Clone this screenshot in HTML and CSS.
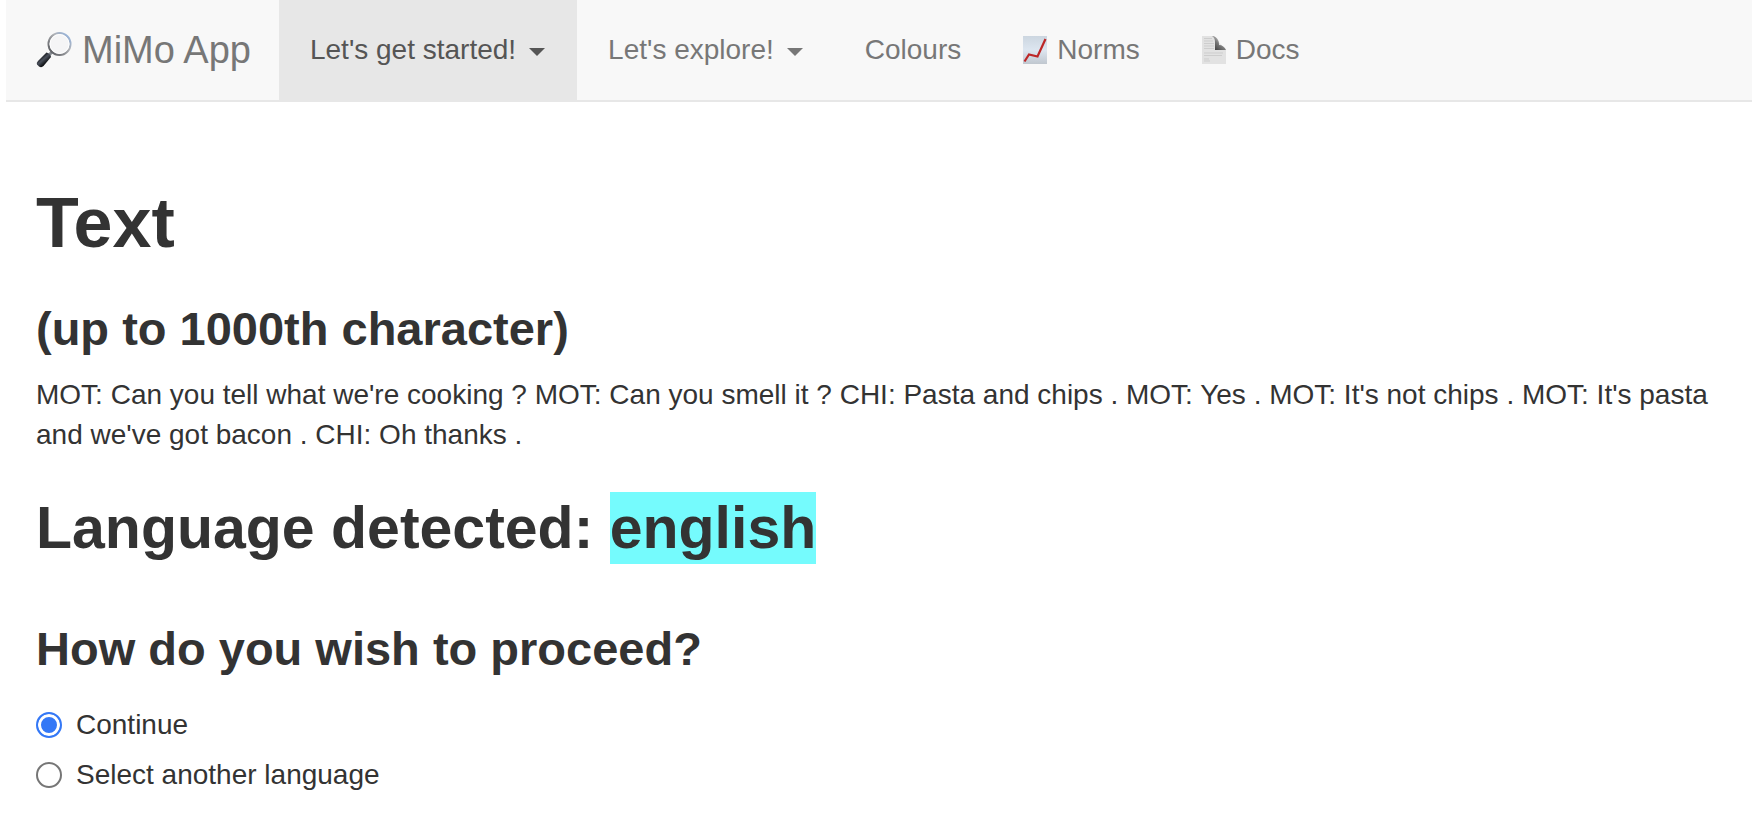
FILE: index.html
```html
<!DOCTYPE html>
<html lang="en">
<head>
<meta charset="utf-8">
<title>MiMo App</title>
<link rel="stylesheet" href="styles.css">
</head>
<body>
<nav class="navbar">
  <a class="brand" href="#">
    <svg class="brand-icon" viewBox="0 0 36 36" aria-hidden="true">
      <defs>
        <linearGradient id="rim" x1="1" y1="0" x2="0" y2="1"><stop offset="0" stop-color="#8fb4e6"/><stop offset=".4" stop-color="#b0b2b6"/><stop offset="1" stop-color="#4c4e52"/></linearGradient>
        <linearGradient id="grip" gradientUnits="userSpaceOnUse" x1="5" y1="24" x2="11" y2="31"><stop offset="0" stop-color="#0e1014"/><stop offset=".45" stop-color="#4b515c"/><stop offset="1" stop-color="#050607"/></linearGradient>
      </defs>
      <path d="M12 24l5-5" stroke="#85898f" stroke-width="3"/>
      <path d="M2 29L10.500 20.500Q14.500 21.500 15 25L7.500 34Q5.500 36 3 34.500L1 32.500Q0 31 2 29z" fill="url(#grip)"/>
      <circle cx="23.500" cy="12" r="11" fill="#f5f5f6" stroke="url(#rim)" stroke-width="2"/>
      <circle cx="23.500" cy="12" r="9.500" fill="none" stroke="#fff" stroke-width="1"/>
    </svg>
    MiMo App
  </a>
  <a class="nav-link active" href="#" aria-haspopup="true">Let's get started! <span class="caret"></span></a>
  <a class="nav-link" href="#" aria-haspopup="true">Let's explore! <span class="caret"></span></a>
  <a class="nav-link" href="#">Colours</a>
  <a class="nav-link" href="#">
    <svg class="nav-icon" viewBox="0 0 24 28" aria-hidden="true">
      <defs><linearGradient id="sheet" x1="0" y1="0" x2="0" y2="1"><stop offset="0" stop-color="#ccd6e0"/><stop offset=".5" stop-color="#dde6f0"/><stop offset="1" stop-color="#c0c7cf"/></linearGradient></defs>
      <path d="M0 0h24v28H0z" fill="url(#sheet)"/>
      <path d="M1.500 25.500L6 18.500l8.500 2L22.500 3" fill="none" stroke="#bd2727" stroke-width="2.200"/>
    </svg>
    Norms
  </a>
  <a class="nav-link" href="#">
    <svg class="nav-icon" viewBox="0 0 24 28" aria-hidden="true">
      <defs><linearGradient id="fold" gradientUnits="userSpaceOnUse" x1="21" y1="4" x2="13" y2="13"><stop offset="0" stop-color="#c4c4c4"/><stop offset=".5" stop-color="#777"/><stop offset="1" stop-color="#484848"/></linearGradient></defs>
      <path d="M0 0h11l13 14v14H0z" fill="#e2e2e2"/>
      <path d="M2 2.500h8M2 5h9M2 7.500h10M2 10h10M2 12.500h10M2 17h19M2 19.500h18M2 23h5M2 25h6" stroke="#cdcdcd" stroke-width="1"/>
      <path d="M10 0c3 0 5 2 6 4 1 2 1 3 1 5 3 0 6 2 7 5H13V6c0-3-1-5-3-6z" fill="url(#fold)"/>
    </svg>
    Docs
  </a>
</nav>
<main class="content">
  <h1>Text</h1>
  <h3>(up to 1000th character)</h3>
  <p>MOT: Can you tell what we're cooking ? MOT: Can you smell it ? CHI: Pasta and chips . MOT: Yes . MOT: It's not chips . MOT: It's pasta and we've got bacon . CHI: Oh thanks .</p>
  <h2>Language detected: <strong class="language">english</strong></h2>
  <form class="options">
    <h3 id="proceed">How do you wish to proceed?</h3>
    <div class="option-list" role="radiogroup" aria-labelledby="proceed">
      <label class="option"><input type="radio" name="proceed" checked>Continue</label>
      <label class="option"><input type="radio" name="proceed">Select another language</label>
    </div>
  </form>
</main>
</body>
</html>
```
FILE: styles.css
```css
* { box-sizing: border-box; }

body {
  margin: 0 0 0 6px;
  background: #fff;
  color: #333;
  font-family: "Liberation Sans", Arial, sans-serif;
  font-size: 28px;
  line-height: 40px;
}

.navbar {
  display: flex;
  background: #f8f8f8;
  border-bottom: 2px solid #e7e7e7;
}

.brand,
.nav-link {
  display: flex;
  align-items: center;
  gap: 10px;
  color: #777;
  text-decoration: none;
  white-space: nowrap;
}

.brand { padding: 30px 28px 30px 30px; font-size: 38px; }
.brand-icon { width: 36px; height: 36px; }
.nav-link { padding: 30px 31px; }
.nav-icon { width: 24px; height: 28px; }

.active {
  margin-bottom: -2px;
  padding-right: 32px;
  padding-bottom: 32px;
  background: #e7e7e7;
  color: #555;
}

.caret {
  margin: 4px 0 0 3px;
  border-top: 8px solid;
  border-right: 8px solid transparent;
  border-left: 8px solid transparent;
}

.content { padding: 82px 20px 20px 30px; }

h1, h2, h3 {
  margin: 40px 0 20px;
  font-weight: 700;
}

h1 { margin-top: 0; font-size: 70px; line-height: 78px; }
h2 { font-size: 59px; line-height: 66px; }
h3 { font-size: 47px; line-height: 53px; }
p { margin: 0 0 20px; }

.language {
  padding: 3px 0;
  background: #75fbfd;
}

.options { padding-top: 1px; }

.option-list {
  display: flex;
  flex-direction: column;
  align-items: flex-start;
  gap: 10px;
  padding-top: 10px;
}

.option {
  display: flex;
  align-items: center;
  gap: 14px;
}

.option input {
  appearance: none;
  width: 26px;
  height: 26px;
  margin: 0;
  border: 2px solid #767676;
  border-radius: 50%;
  background: #fff;
}

.option input:checked {
  border-color: #3478f6;
  background: #3478f6;
  box-shadow: inset 0 0 0 3px #fff;
}
```
